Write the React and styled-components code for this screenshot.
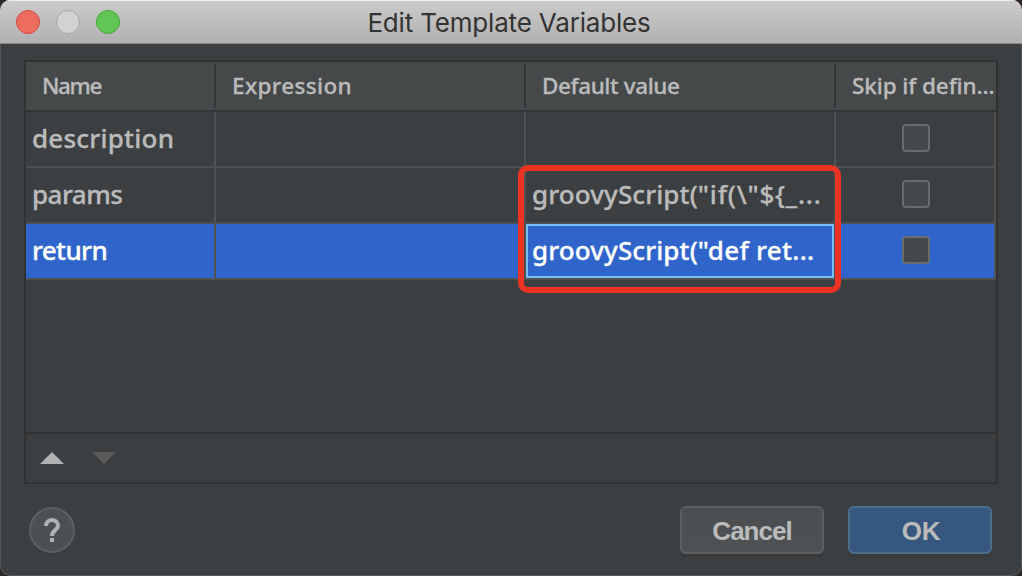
import React from "react";
import styled, { createGlobalStyle } from "styled-components";

const GlobalStyle = createGlobalStyle`
  * { box-sizing: border-box; }
  body { margin: 0; background: #2b2527; }
`;

const Window = styled.div`
  position: relative;
  width: 1022px;
  height: 576px;
  display: flex;
  flex-direction: column;
  background: #3c3f41;
  border-radius: 10px;
  overflow: hidden;
  font-family: "Noto Sans", "Open Sans", sans-serif;
`;

const WindowEdge = styled.div`
  position: absolute;
  inset: 44px 0 0 0;
  border: 1px solid #555859;
  border-top: 0;
  border-radius: 0 0 10px 10px;
  pointer-events: none;
`;

const TitleBar = styled.header`
  flex: none;
  height: 44px;
  display: flex;
  align-items: center;
  padding: 0 16px;
  background: linear-gradient(#cccccc, #b1b1b1);
  border-bottom: 1px solid #868888;
  box-shadow: inset 0 1px 0 #f0f0f0;
`;

const Lights = styled.div`
  flex: 1;
  display: flex;
  gap: 16px;
`;

const Light = styled.span`
  width: 24px;
  height: 24px;
  border-radius: 50%;
  background: ${(p) => p.$fill};
  border: 1px solid ${(p) => p.$edge};
`;

const Title = styled.h1`
  margin: 0 4px 0 0;
  padding-top: 2px;
  font: 400 26px/42px Inter, sans-serif;
  letter-spacing: -0.18px;
  color: #333;
  white-space: nowrap;
`;

const Spacer = styled.div`
  flex: 1;
`;

const Body = styled.main`
  flex: 1;
  display: flex;
  flex-direction: column;
  padding: 16px 24px 0;
`;

const Panel = styled.section`
  height: 424px;
  display: flex;
  flex-direction: column;
  border: 2px solid #323232;
`;

const columns = "190px 310px 310px 160px";

const HeaderRow = styled.div`
  flex: none;
  display: grid;
  grid-template-columns: ${columns};
  height: 50px;
  padding-top: 2px;
  background: #45494a;
  border-bottom: 2px solid #323537;
`;

const HeaderCell = styled.div`
  height: 44px;
  padding-left: 16px;
  border-right: 2px solid ${(p) => (p.$last ? "transparent" : "#343739")};
  font-size: 22.5px;
  font-weight: 500;
  line-height: 43px;
  -webkit-text-stroke: 0.3px currentColor;
  letter-spacing: ${(p) => p.$track || "0"};
  color: #bbb;
  white-space: nowrap;
`;

const Row = styled.div`
  flex: none;
  display: grid;
  grid-template-columns: ${columns};
  height: 56px;
  color: ${(p) => (p.$selected ? "#fff" : "#bbb")};
  background: ${(p) => (p.$selected ? "#2f65ca" : "transparent")};
`;

const Cell = styled.div`
  display: flex;
  align-items: center;
  justify-content: ${(p) => (p.$center ? "center" : "flex-start")};
  padding-left: ${(p) => (p.$center ? "2px" : "6px")};
  padding-bottom: 2px;
  border-right: 2px solid #4f5152;
  border-bottom: 2px solid #4f5152;
  font-size: 26px;
  font-weight: 500;
  line-height: 52px;
  -webkit-text-stroke: 0.3px currentColor;
  letter-spacing: ${(p) => p.$track || "0"};
  white-space: pre;
  box-shadow: ${(p) => (p.$focused ? "inset 0 0 0 2px #78bff8" : "none")};
`;

const Code = styled.span`
  letter-spacing: ${(p) => p.$track};
`;

const CheckBox = styled.span`
  width: 28px;
  height: 28px;
  border: 2px solid #6b6b6b;
  border-radius: 4px;
  background: #43494a;
`;

const Toolbar = styled.div`
  margin-top: auto;
  height: 50px;
  display: flex;
  align-items: center;
  gap: 28px;
  padding-left: 14px;
  border-top: 2px solid #323232;
`;

const Arrow = styled.svg`
  display: block;
  width: 24px;
  height: 12px;
  fill: ${(p) => p.$color};
`;

const Footer = styled.footer`
  display: flex;
  align-items: center;
  gap: 24px;
  height: 48px;
  margin-top: 22px;
  padding: 0 6px 0 5px;
`;

const HelpButton = styled.button`
  width: 46px;
  height: 46px;
  padding: 0;
  display: grid;
  place-items: center;
  border: 2px solid #5e6060;
  border-radius: 50%;
  background: #4c5052;
`;

const Button = styled.button`
  width: 144px;
  height: 48px;
  padding: 2px 0 0 ${(p) => (p.$primary ? "2px" : "0")};
  border: 2px solid ${(p) => (p.$primary ? "#4c708c" : "#5e6060")};
  border-radius: 6px;
  background: ${(p) => (p.$primary ? "#365880" : "linear-gradient(#4a4e50, #4e5254)")};
  box-shadow: 0 3px 1px #37393b;
  font: 700 26px/42px "Liberation Sans", sans-serif;
  letter-spacing: ${(p) => (p.$primary ? "-0.3px" : "-1px")};
  color: #bbb;
`;

const Highlight = styled.div`
  position: absolute;
  left: 518px;
  top: 165px;
  width: 323px;
  height: 128px;
  border: 6px solid #ec3323;
  border-radius: 10px;
  pointer-events: none;
`;

const rows = [
  { name: "description", nameTrack: "0.22px" },
  {
    name: "params",
    nameTrack: "-0.55px",
    call: "groovyScript(",
    args: '"if(\\"${_...',
    argsTrack: "0.8px",
  },
  {
    name: "return",
    nameTrack: "-0.65px",
    call: "groovyScript(",
    args: '"def ret...',
    argsTrack: "0.3px",
    selected: true,
  },
];

export default function App() {
  return (
    <>
      <GlobalStyle />
      <Window>
        <TitleBar>
          <Lights>
            <Light $fill="#ee6b60" $edge="#d6493f" />
            <Light $fill="#d2d2d2" $edge="#a9a9a9" />
            <Light $fill="#62c655" $edge="#46a637" />
          </Lights>
          <Title>Edit Template Variables</Title>
          <Spacer />
        </TitleBar>
        <Body>
          <Panel>
            <HeaderRow>
              <HeaderCell $track="-1.4px">Name</HeaderCell>
              <HeaderCell $track="0.35px">Expression</HeaderCell>
              <HeaderCell $track="-0.4px">Default value</HeaderCell>
              <HeaderCell $last $track="-0.1px">Skip if defin...</HeaderCell>
            </HeaderRow>
            {rows.map((row) => (
              <Row key={row.name} $selected={row.selected}>
                <Cell $track={row.nameTrack}>{row.name}</Cell>
                <Cell />
                <Cell $focused={row.selected}>
                  {row.call && (
                    <span>
                      <Code $track="0.1px">{row.call}</Code>
                      <Code $track={row.argsTrack}>{row.args}</Code>
                    </span>
                  )}
                </Cell>
                <Cell $center>
                  <CheckBox />
                </Cell>
              </Row>
            ))}
            <Toolbar>
              <Arrow viewBox="0 0 24 12" $color="#afb1b3">
                <path d="M0 12 12 0 24 12Z" />
              </Arrow>
              <Arrow viewBox="0 0 24 12" $color="#5a5a5a">
                <path d="M0 0H24L12 12Z" />
              </Arrow>
            </Toolbar>
          </Panel>
          <Footer>
            <HelpButton aria-label="Help">
              <svg width="16" height="24" viewBox="0 0 16 24">
                <path
                  d="M2 8C2 4.5 4.6 2 8 2S14 4.6 14 7.8C14 12 8 12 8 18"
                  fill="none"
                  stroke="#afb1b3"
                  strokeWidth="4"
                />
                <rect x="6" y="20" width="4" height="4" fill="#afb1b3" />
              </svg>
            </HelpButton>
            <Spacer />
            <Button>Cancel</Button>
            <Button $primary>OK</Button>
          </Footer>
        </Body>
        <WindowEdge />
        <Highlight />
      </Window>
    </>
  );
}
